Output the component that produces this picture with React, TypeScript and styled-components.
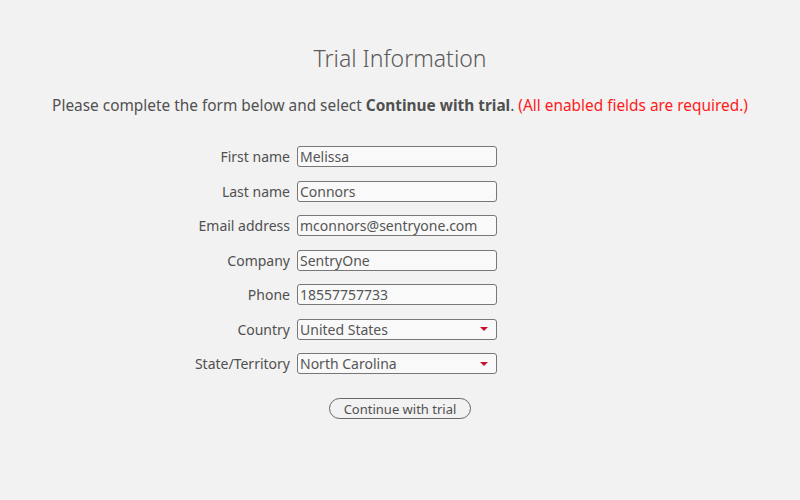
import styled, { createGlobalStyle } from 'styled-components'

const GlobalStyle = createGlobalStyle`
    html, body {
        margin: 0;
        padding: 0;
        background: #f2f2f2;
    }
    body {
        font-family: 'Noto Sans', 'Open Sans', sans-serif;
        color: #505050;
    }
`

type Field = {
    label: string
    value: string
    select?: boolean
}

const fields: Field[] = [
    { label: 'First name', value: 'Melissa' },
    { label: 'Last name', value: 'Connors' },
    { label: 'Email address', value: 'mconnors@sentryone.com' },
    { label: 'Company', value: 'SentryOne' },
    { label: 'Phone', value: '18557757733' },
    { label: 'Country', value: 'United States', select: true },
    { label: 'State/Territory', value: 'North Carolina', select: true },
]

const App = () => {
    return (
        <>
            <GlobalStyle />
            <Page>
                <Title>Trial Information</Title>
                <Intro>
                    Please complete the form below and select <strong>Continue with trial</strong>.{' '}
                    <Required>(All enabled fields are required.)</Required>
                </Intro>

                <Form>
                    {fields.map((field) => (
                        <Row key={field.label}>
                            <Label>{field.label}</Label>
                            <FieldBox>
                                <FieldValue>{field.value}</FieldValue>
                                {field.select && <Caret />}
                            </FieldBox>
                        </Row>
                    ))}
                </Form>

                <ContinueButton type="button">Continue with trial</ContinueButton>
            </Page>
        </>
    )
}

export default App

const Page = styled.div`
    width: 800px;
    height: 500px;
    display: flex;
    flex-direction: column;
    align-items: center;
    padding-top: 43px;
    box-sizing: border-box;
`

const Title = styled.h1`
    margin: 0;
    font-size: 23px;
    font-weight: 300;
    line-height: 30px;
    color: #5a5a5a;
`

const Intro = styled.p`
    margin: 23px 0 0;
    font-size: 15.4px;
    line-height: 20px;
    color: #505050;

    strong {
        font-weight: 700;
    }
`

const Required = styled.span`
    color: #ff1a1a;
`

const Form = styled.div`
    align-self: flex-start;
    display: grid;
    grid-template-columns: 150px 200px;
    column-gap: 7px;
    row-gap: 13.5px;
    margin: 30px 0 0 140px;
`

const Row = styled.div`
    display: contents;
`

const Label = styled.div`
    display: flex;
    align-items: center;
    justify-content: flex-end;
    font-size: 14px;
    color: #505050;
    white-space: nowrap;
`

const FieldBox = styled.div`
    display: flex;
    align-items: center;
    height: 21px;
    box-sizing: border-box;
    border: 1px solid #777;
    border-radius: 3px;
    background: #f9f9f9;
    padding: 0 8px 0 2px;
`

const FieldValue = styled.span`
    flex: 1;
    font-size: 14px;
    color: #555;
    white-space: nowrap;
`

const Caret = styled.span`
    width: 0;
    height: 0;
    border-left: 4px solid transparent;
    border-right: 4px solid transparent;
    border-top: 4px solid #c8102e;
`

const ContinueButton = styled.button`
    margin-top: 24px;
    width: 142px;
    height: 21px;
    border: 1px solid #666;
    border-radius: 11px;
    background: #f2f2f2;
    font-family: 'Noto Sans', 'Open Sans', sans-serif;
    font-size: 13px;
    color: #505050;
    padding: 0;
    cursor: pointer;
`
